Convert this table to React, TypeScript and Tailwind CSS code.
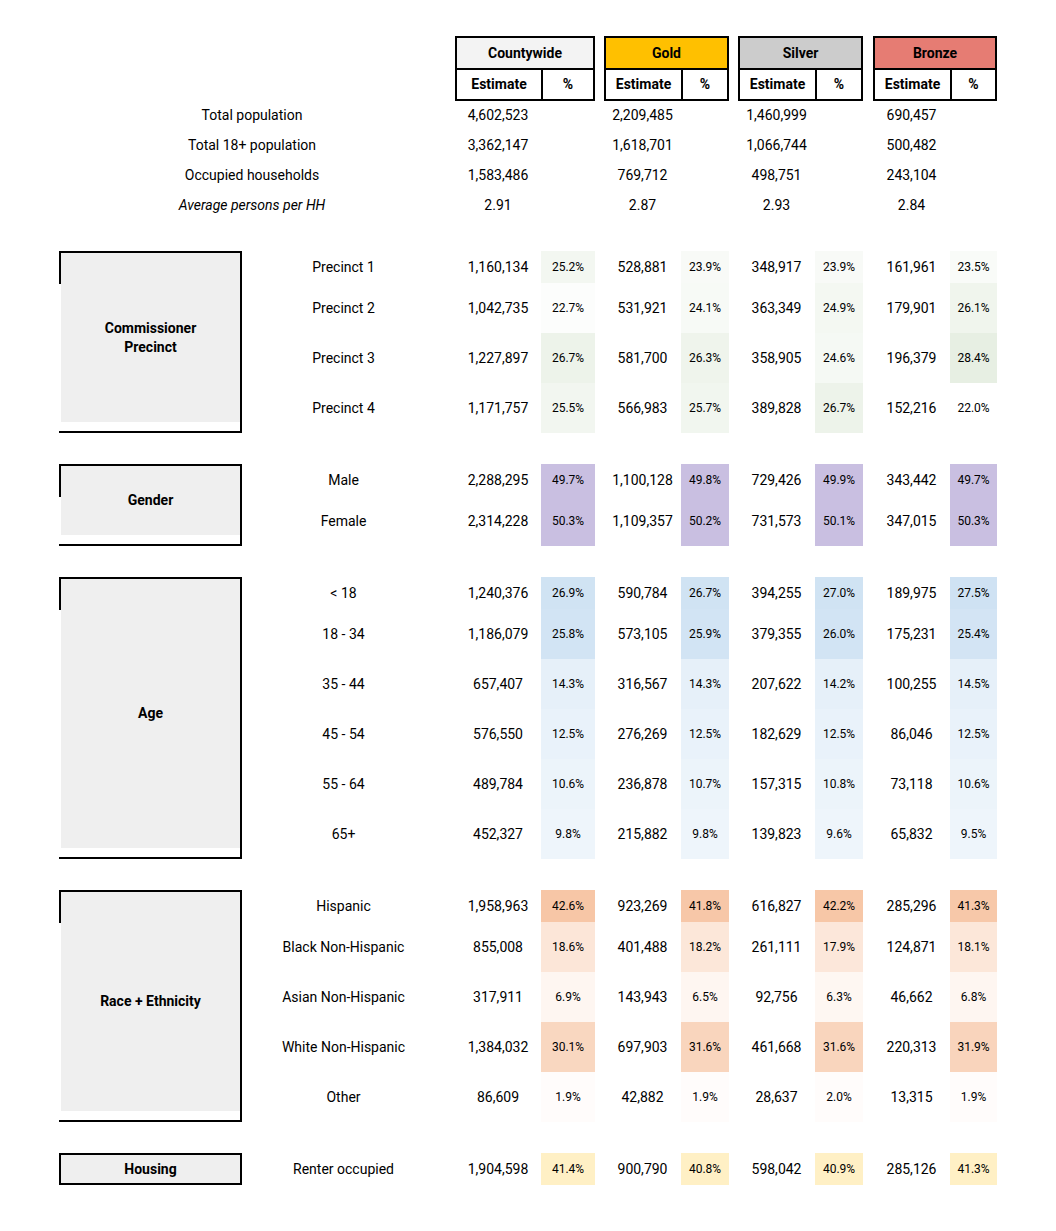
import React from 'react';

type Cell = [string, number?];
type Row = { label: string; cells: Cell[] };
type Section = {
  title: string[];
  rows: Row[];
  color: [number, number, number];
  min: number;
  max: number;
};

const groups = [
  { name: 'Countywide', bg: 'bg-[#f3f3f3]', box: 'w-[140px]', est: 'w-[86px]', pct: 'w-[54px]' },
  { name: 'Gold', bg: 'bg-[#ffc000]', box: 'w-[125px]', est: 'w-[77px]', pct: 'w-[48px]' },
  { name: 'Silver', bg: 'bg-[#cccccc]', box: 'w-[125px]', est: 'w-[77px]', pct: 'w-[48px]' },
  { name: 'Bronze', bg: 'bg-[#e67c73]', box: 'w-[124px]', est: 'w-[77px]', pct: 'w-[47px]' },
];
const gaps = ['', 'ml-[9px]', 'ml-[9px]', 'ml-[10px]'];

const topRows = [
  { label: 'Total population', values: ['4,602,523', '2,209,485', '1,460,999', '690,457'] },
  { label: 'Total 18+ population', values: ['3,362,147', '1,618,701', '1,066,744', '500,482'] },
  { label: 'Occupied households', values: ['1,583,486', '769,712', '498,751', '243,104'] },
  { label: 'Average persons per HH', values: ['2.91', '2.87', '2.93', '2.84'], italic: true },
];

const sections: Section[] = [
  {
    title: ['Commissioner', 'Precinct'],
    color: [231, 239, 227],
    min: 22.0,
    max: 28.4,
    rows: [
      { label: 'Precinct 1', cells: [['1,160,134', 25.2], ['528,881', 23.9], ['348,917', 23.9], ['161,961', 23.5]] },
      { label: 'Precinct 2', cells: [['1,042,735', 22.7], ['531,921', 24.1], ['363,349', 24.9], ['179,901', 26.1]] },
      { label: 'Precinct 3', cells: [['1,227,897', 26.7], ['581,700', 26.3], ['358,905', 24.6], ['196,379', 28.4]] },
      { label: 'Precinct 4', cells: [['1,171,757', 25.5], ['566,983', 25.7], ['389,828', 26.7], ['152,216', 22.0]] },
    ],
  },
  {
    title: ['Gender'],
    color: [201, 191, 225],
    min: 0,
    max: 0,
    rows: [
      { label: 'Male', cells: [['2,288,295', 49.7], ['1,100,128', 49.8], ['729,426', 49.9], ['343,442', 49.7]] },
      { label: 'Female', cells: [['2,314,228', 50.3], ['1,109,357', 50.2], ['731,573', 50.1], ['347,015', 50.3]] },
    ],
  },
  {
    title: ['Age'],
    color: [207, 226, 243],
    min: 0,
    max: 27.5,
    rows: [
      { label: '< 18', cells: [['1,240,376', 26.9], ['590,784', 26.7], ['394,255', 27.0], ['189,975', 27.5]] },
      { label: '18 - 34', cells: [['1,186,079', 25.8], ['573,105', 25.9], ['379,355', 26.0], ['175,231', 25.4]] },
      { label: '35 - 44', cells: [['657,407', 14.3], ['316,567', 14.3], ['207,622', 14.2], ['100,255', 14.5]] },
      { label: '45 - 54', cells: [['576,550', 12.5], ['276,269', 12.5], ['182,629', 12.5], ['86,046', 12.5]] },
      { label: '55 - 64', cells: [['489,784', 10.6], ['236,878', 10.7], ['157,315', 10.8], ['73,118', 10.6]] },
      { label: '65+', cells: [['452,327', 9.8], ['215,882', 9.8], ['139,823', 9.6], ['65,832', 9.5]] },
    ],
  },
  {
    title: ['Race + Ethnicity'],
    color: [247, 198, 166],
    min: 0,
    max: 42.6,
    rows: [
      { label: 'Hispanic', cells: [['1,958,963', 42.6], ['923,269', 41.8], ['616,827', 42.2], ['285,296', 41.3]] },
      { label: 'Black Non-Hispanic', cells: [['855,008', 18.6], ['401,488', 18.2], ['261,111', 17.9], ['124,871', 18.1]] },
      { label: 'Asian Non-Hispanic', cells: [['317,911', 6.9], ['143,943', 6.5], ['92,756', 6.3], ['46,662', 6.8]] },
      { label: 'White Non-Hispanic', cells: [['1,384,032', 30.1], ['697,903', 31.6], ['461,668', 31.6], ['220,313', 31.9]] },
      { label: 'Other', cells: [['86,609', 1.9], ['42,882', 1.9], ['28,637', 2.0], ['13,315', 1.9]] },
    ],
  },
];

const shade = (s: Section, v: number) => {
  const t = s.max === s.min ? 1 : Math.max(0, Math.min(1, (v - s.min) / (s.max - s.min)));
  const [r, g, b] = s.color.map((c) => Math.round(255 - (255 - c) * t));
  return `rgb(${r}, ${g}, ${b})`;
};

const DataCells = ({ cells, section }: { cells: Cell[]; section?: Section }) => (
  <>
    {cells.map(([est, pct], i) => (
      <div key={i} className={`flex ${gaps[i]}`}>
        <div className={`${groups[i].est} flex items-center justify-center`}>{est}</div>
        <div
          className={`${groups[i].pct} flex items-center justify-center text-[12px]`}
          style={section && pct !== undefined ? { backgroundColor: shade(section, pct) } : undefined}
        >
          {pct !== undefined ? `${pct.toFixed(1)}%` : ''}
        </div>
      </div>
    ))}
  </>
);

const LabelBox = ({ title, single }: { title: string[]; single: boolean }) => {
  if (single) {
    return (
      <div className="w-[183px] border-2 border-black bg-[#efefef] flex items-center justify-center font-bold">
        {title.join(' ')}
      </div>
    );
  }
  return (
    <div className="w-[183px] flex border-t-2 border-r-2 border-b-2 border-black">
      <div className="w-[2px]">
        <div className="h-[31px] bg-black" />
      </div>
      <div className="flex-1 flex flex-col">
        <div className="flex-1 bg-[#efefef] flex flex-col items-center justify-center font-bold leading-[19px]">
          {title.map((t) => (
            <span key={t}>{t}</span>
          ))}
        </div>
        <div className="h-[9px]" />
      </div>
    </div>
  );
};

export default function App() {
  const housing: Section = { title: ['Housing'], color: [255, 240, 197], min: 0, max: 0, rows: [] };
  return (
    <div className="w-[1056px] min-h-[1231px] bg-white text-black text-[14px] pt-[36px] font-['Roboto','Liberation_Sans',sans-serif]">
      {/* header */}
      <div className="flex pl-[455px]">
        {groups.map((g, i) => (
          <div key={g.name} className={`${g.box} ${gaps[i]} border-2 border-black font-bold`}>
            <div className={`h-[32px] ${g.bg} border-b-2 border-black flex items-center justify-center`}>{g.name}</div>
            <div className="h-[29px] flex bg-white">
              <div className={`${g.est} border-r-2 border-black flex items-center justify-center`}>Estimate</div>
              <div className="flex-1 flex items-center justify-center">%</div>
            </div>
          </div>
        ))}
      </div>

      {/* overall rows */}
      <div className="flex flex-col -mt-[1px]">
        {topRows.map((r) => (
          <div key={r.label} className="flex h-[30px]">
            <div className={`w-[386px] ml-[59px] mr-[10px] flex items-center justify-center ${r.italic ? 'italic' : ''}`}>
              {r.label}
            </div>
            <DataCells cells={r.values.map((v) => [v] as Cell)} />
          </div>
        ))}
      </div>

      {/* sections */}
      {sections.map((s) => (
        <div key={s.title.join()} className="flex mt-[31px] pl-[59px]">
          <LabelBox title={s.title} single={false} />
          <div className="flex flex-col">
            {s.rows.map((r, ri) => (
              <div key={r.label} className={`flex ${ri === 0 ? 'h-[32px]' : 'h-[50px]'}`}>
                <div className="w-[203px] mr-[10px] flex items-center justify-center">{r.label}</div>
                <DataCells cells={r.cells} section={s} />
              </div>
            ))}
          </div>
        </div>
      ))}

      <div className="flex mt-[31px] pl-[59px]">
        <LabelBox title={['Housing']} single />
        <div className="flex h-[32px]">
          <div className="w-[203px] mr-[10px] flex items-center justify-center">Renter occupied</div>
          <DataCells
            cells={[['1,904,598', 41.4], ['900,790', 40.8], ['598,042', 40.9], ['285,126', 41.3]]}
            section={housing}
          />
        </div>
      </div>
    </div>
  );
}
